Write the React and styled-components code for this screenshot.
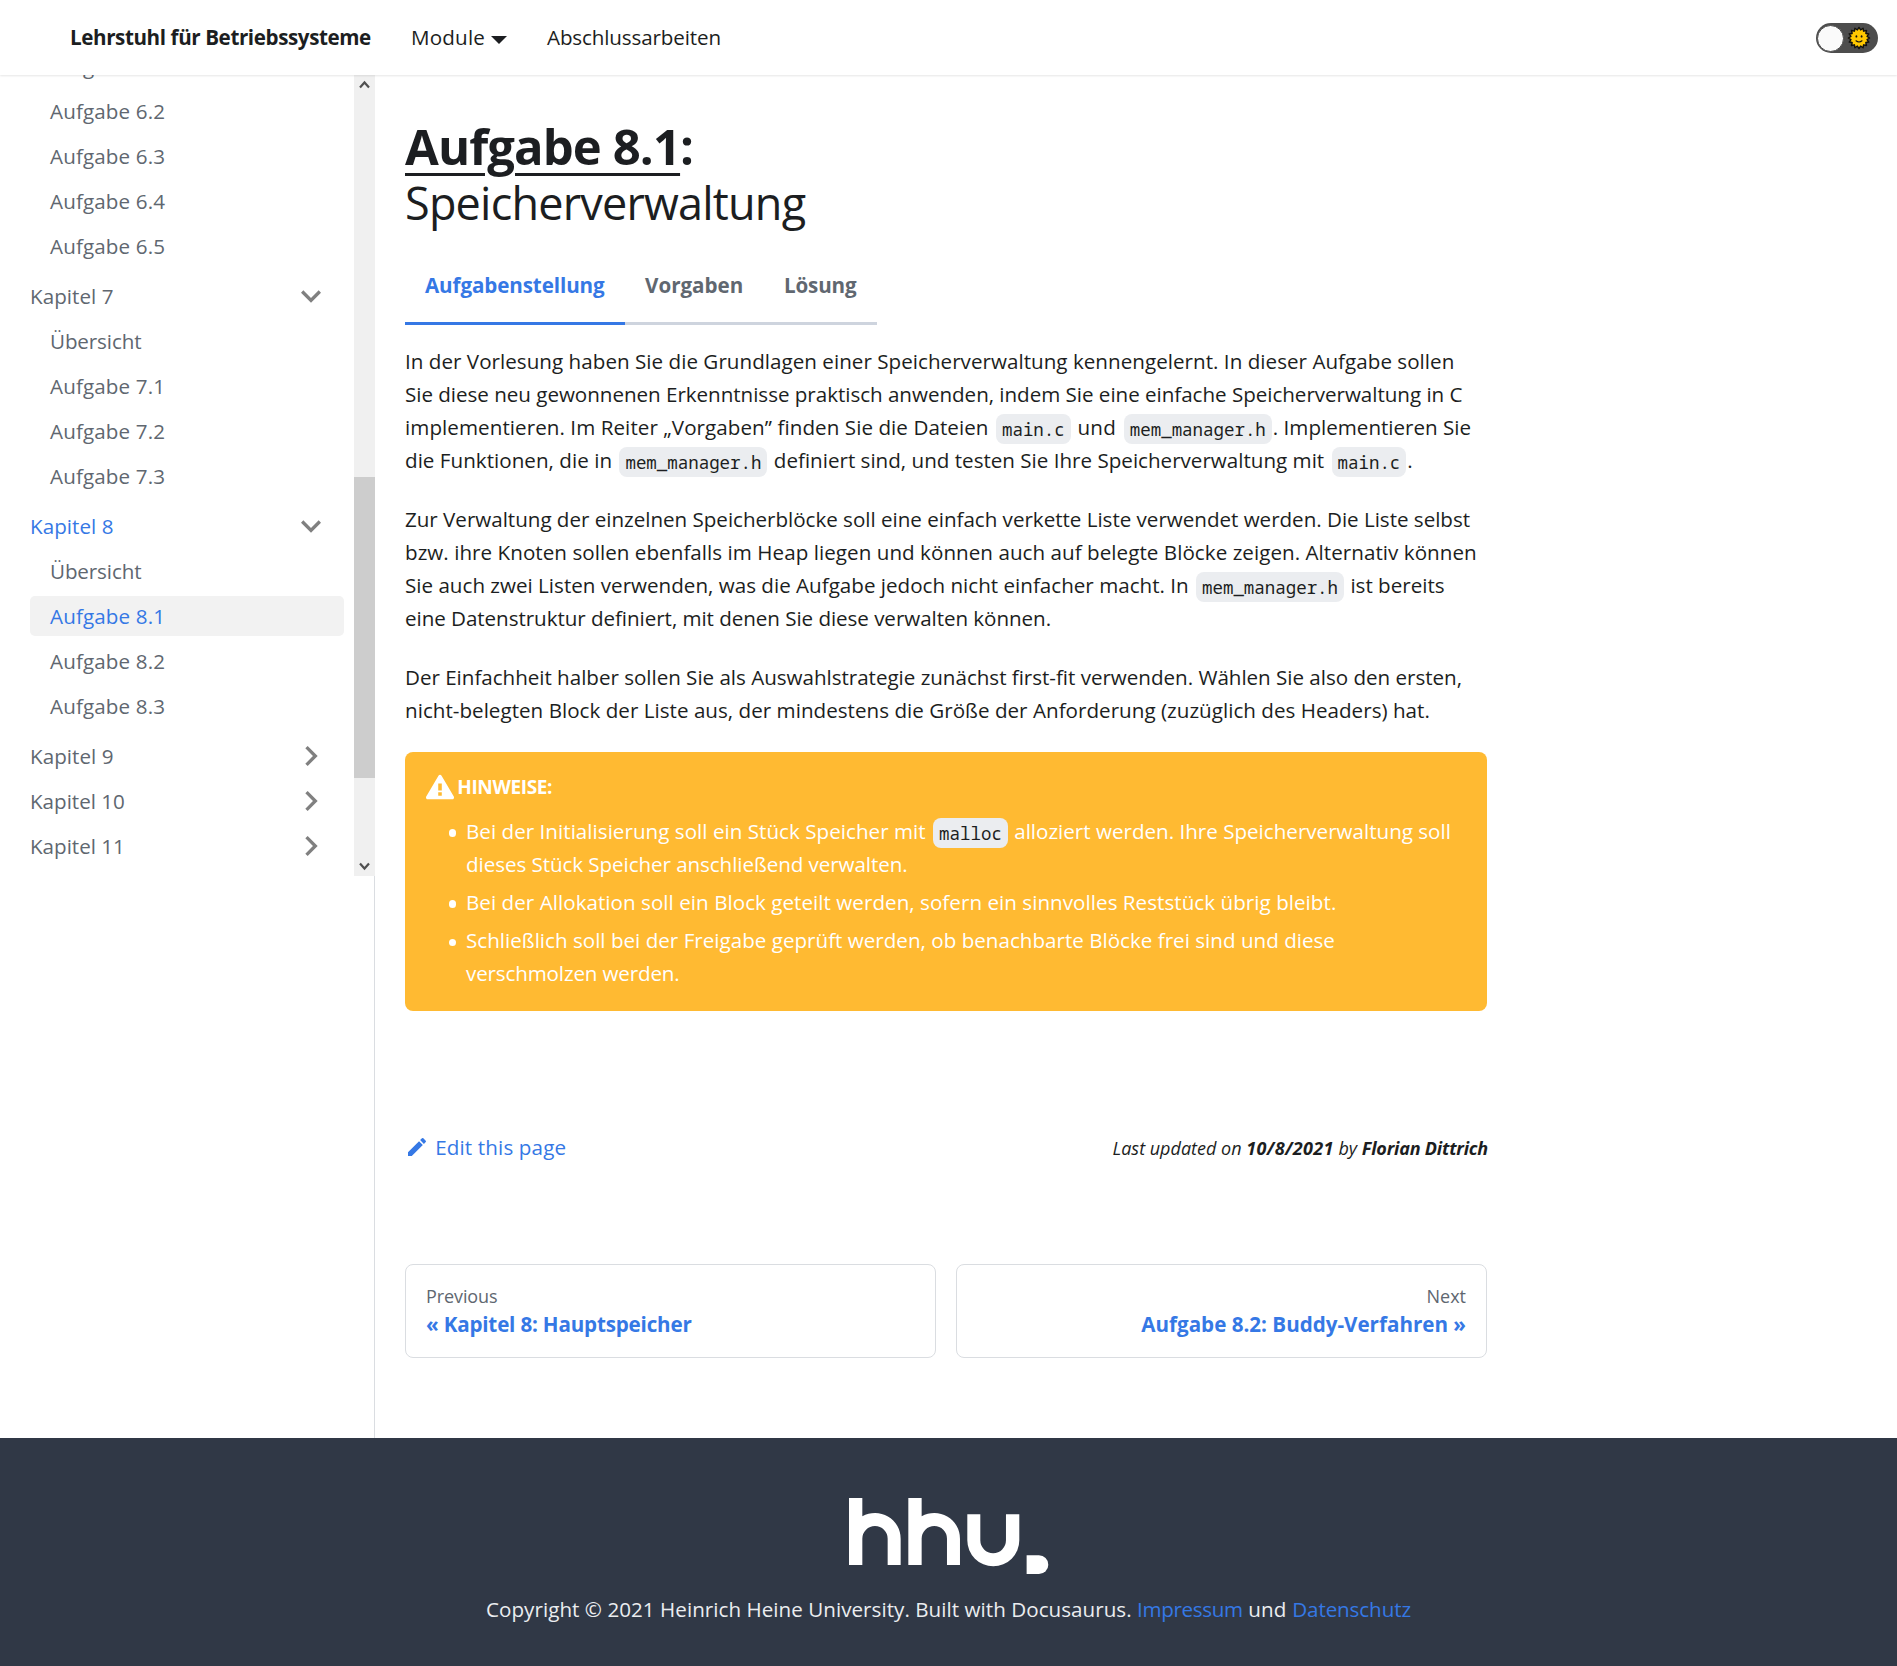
import React from 'react';
import styled, { createGlobalStyle } from 'styled-components';

const blue = '#3578e5';
const ink = '#1c1e21';
const muted = '#606770';
const line = '#dadde1';

const GlobalStyle = createGlobalStyle`
  *, *::before, *::after { box-sizing: border-box; }
  html, body { margin: 0; padding: 0; background: #fff; }
  body {
    font-family: 'Open Sans', 'Noto Sans', sans-serif;
    font-size: 20.6px;
    line-height: 33.25px;
    color: ${ink};
  }
  a { color: inherit; text-decoration: none; }
  ul { list-style: none; margin: 0; padding: 0; }
  p, h1, h5 { margin: 0; }
`;

const T = styled.span`
  letter-spacing: ${(p) => p.$ls || 0}px;
`;

const Page = styled.div`
  display: flex;
  flex-direction: column;
  min-height: 1666px;
`;

const Navbar = styled.nav`
  position: relative;
  z-index: 2;
  display: flex;
  align-items: center;
  justify-content: space-between;
  height: 75px;
  padding: 0 19px 0 70px;
  background: #fff;
  box-shadow: 0 1px 2px 0 rgba(0, 0, 0, 0.1);
`;

const NavItems = styled.div`
  display: flex;
  align-items: center;
`;

const Brand = styled.a`
  width: 341px;
  font-weight: 700;
`;

const NavLink = styled.a`
  display: flex;
  align-items: center;
  width: ${(p) => p.$width || 'auto'};
`;

const Caret = styled.span`
  margin: 5px 0 0 6px;
  border: 8px solid transparent;
  border-top-color: ${ink};
  border-bottom-width: 0;
`;

const Toggle = styled.button`
  display: flex;
  align-items: center;
  justify-content: space-between;
  width: 62px;
  height: 30px;
  margin: 1px 0 0;
  padding: 0 7px 0 1px;
  border: 0;
  border-radius: 30px;
  background: #4d4d4d;
`;

const Knob = styled.span`
  width: 27px;
  height: 27px;
  border: 1px solid #4d4d4d;
  border-radius: 50%;
  background: #fafafa;
`;

const Body = styled.div`
  display: flex;
  height: 1363px;
`;

const Sidebar = styled.aside`
  width: 375px;
  flex: none;
  border-right: 1px solid ${line};
`;

const SidebarView = styled.div`
  display: flex;
  width: 375px;
  height: 801px;
  overflow: hidden;
`;

const Menu = styled.ul`
  flex: 1;
  margin-top: -29px;
  padding: 0 10px 0 30px;
`;

const MenuItem = styled.li`
  display: flex;
  align-items: center;
  justify-content: space-between;
  height: 40px;
  margin-top: ${(p) => (p.$chapterStart ? 10 : 5)}px;
  padding-left: ${(p) => (p.$nested ? 20 : 0)}px;
  border-radius: 5px;
  line-height: 25px;
  letter-spacing: ${(p) => p.$ls || 0}px;
  color: ${(p) => (p.$active ? blue : muted)};
  background: ${(p) => (p.$active && p.$nested ? '#f2f2f2' : 'transparent')};
  &:first-child { margin-top: 0; }
`;

const Chevron = styled.svg`
  width: 40px;
  height: 40px;
  margin-right: 12.6px;
  fill: #808080;
  transform: rotate(${(p) => (p.$open ? 180 : 90)}deg);
`;

const Scrollbar = styled.div`
  display: flex;
  flex-direction: column;
  align-items: center;
  justify-content: space-between;
  width: 21px;
  padding: 5px 0;
  background: linear-gradient(#cdcdcd, #cdcdcd) 0 402px / 21px 301px no-repeat #f0f0f0;
  svg { width: 11px; height: 9px; fill: none; stroke: #505050; stroke-width: 2.2; }
`;

const Main = styled.main`
  width: 1082px;
  margin: 43.5px 0 0 30px;
`;

const Title = styled.h1`
  display: flex;
  flex-direction: column;
  font-size: 49px;
  line-height: 55px;
  font-weight: 700;
  u {
    text-decoration-thickness: 3px;
    text-underline-offset: 8px;
  }
`;

const Subtitle = styled.span`
  font-size: 45px;
  line-height: 57px;
  font-weight: 400;
`;

const Tabs = styled.div`
  display: flex;
  margin-top: 16.5px;
`;

const Tab = styled.div`
  width: ${(p) => p.$width}px;
  height: 78px;
  padding: 22px 0 0 20px;
  border-bottom: 3px solid ${(p) => (p.$active ? blue : '#ced4de')};
  color: ${(p) => (p.$active ? blue : muted)};
  font-weight: 700;
`;

const Article = styled.div`
  margin-top: 20px;
`;

const Paragraph = styled.p`
  margin-bottom: 25.5px;
  &:last-of-type { margin-bottom: 24.9px; }
`;

const Line = styled.span`
  display: block;
  height: 33.1px;
  white-space: nowrap;
`;

const Code = styled.code`
  display: inline-block;
  height: 30px;
  margin: 0 1px 0 2px;
  padding: 0 6px;
  border-radius: 8px;
  background: #ebedf0;
  color: ${ink};
  font-family: 'Noto Sans Mono', 'Liberation Mono', monospace;
  font-size: 17.45px;
  line-height: 30px;
  vertical-align: -1px;
`;

const Admonition = styled.section`
  height: 259px;
  padding: 20px 22px;
  border-radius: 8px;
  background: #ffba32;
  color: #fff;
`;

const AdmonitionTitle = styled.h5`
  display: flex;
  align-items: center;
  gap: 3.2px;
  height: 30px;
  font-size: 19px;
  font-weight: 700;
  svg { width: 28px; height: 28px; margin-left: -1px; fill: #fff; }
  span { padding-top: 1px; }
`;

const Hints = styled.ul`
  display: flex;
  flex-direction: column;
  gap: 5px;
  margin-top: 12.9px;
`;

const Hint = styled.li`
  display: flex;
  &::before {
    content: '';
    flex: none;
    width: 7.5px;
    height: 7.5px;
    margin: 14.5px 10px 0 21.5px;
    border-radius: 50%;
    background: #fff;
  }
`;

const DocMeta = styled.div`
  display: flex;
  align-items: center;
  justify-content: space-between;
  height: 34px;
  margin-top: 119.5px;
`;

const EditLink = styled.a`
  display: flex;
  align-items: center;
  gap: 6.2px;
  color: ${blue};
  svg { width: 24px; height: 24px; fill: ${blue}; }
`;

const Updated = styled.em`
  margin-right: -1px;
  padding-top: 2px;
  font-size: 18px;
  white-space: nowrap;
`;

const Pager = styled.nav`
  display: grid;
  grid-template-columns: 1fr 1fr;
  gap: 20px;
  margin-top: 99.5px;
`;

const PagerLink = styled.a`
  height: 94px;
  padding: 17px 20px;
  border: 1px solid ${line};
  border-radius: 8px;
  text-align: ${(p) => (p.$next ? 'right' : 'left')};
`;

const PagerHint = styled.div`
  font-size: 18px;
  line-height: 28px;
  color: ${muted};
`;

const PagerLabel = styled.div`
  font-weight: 700;
  line-height: 28px;
  color: ${blue};
`;

const Footer = styled.footer`
  display: flex;
  flex-direction: column;
  align-items: center;
  flex: 1;
  padding-top: 60px;
  background: #303846;
  color: #ebedf0;
`;

const Logo = styled.svg`
  width: 199.3px;
  height: 76px;
  margin-left: 1px;
  fill: #fff;
`;

const Copyright = styled.div`
  margin-top: 19px;
  white-space: nowrap;
  a { color: ${blue}; }
`;

const MENU = [
  { t: 'Aufgabe 6.1', nested: true, ls: 0.13 },
  { t: 'Aufgabe 6.2', nested: true, ls: 0.13 },
  { t: 'Aufgabe 6.3', nested: true, ls: 0.13 },
  { t: 'Aufgabe 6.4', nested: true, ls: 0.13 },
  { t: 'Aufgabe 6.5', nested: true, ls: 0.13 },
  { t: 'Kapitel 7', open: true, start: true, ls: 0.05 },
  { t: 'Übersicht', nested: true, ls: -0.12 },
  { t: 'Aufgabe 7.1', nested: true, ls: 0.13 },
  { t: 'Aufgabe 7.2', nested: true, ls: 0.13 },
  { t: 'Aufgabe 7.3', nested: true, ls: 0.13 },
  { t: 'Kapitel 8', open: true, start: true, active: true, ls: 0.05 },
  { t: 'Übersicht', nested: true, ls: -0.12 },
  { t: 'Aufgabe 8.1', nested: true, active: true, ls: 0.13 },
  { t: 'Aufgabe 8.2', nested: true, ls: 0.13 },
  { t: 'Aufgabe 8.3', nested: true, ls: 0.13 },
  { t: 'Kapitel 9', start: true, ls: 0.05 },
  { t: 'Kapitel 10' },
  { t: 'Kapitel 11' },
];

const spikes = Array.from({ length: 32 }, (_, i) => {
  const r = i % 2 ? 8.2 : 10.6;
  const a = (i * Math.PI) / 16;
  return `${(12 + r * Math.cos(a)).toFixed(2)},${(12 + r * Math.sin(a)).toFixed(2)}`;
}).join(' ');

const Sun = () => (
  <svg width="24" height="24" viewBox="0 0 24 24">
    <polygon points={spikes} fill="#ffc800" stroke="#111" strokeWidth="1.4" strokeLinejoin="round" />
    <ellipse cx="9.4" cy="10.4" rx="0.9" ry="1.2" fill="#111" />
    <ellipse cx="14.6" cy="10.4" rx="0.9" ry="1.2" fill="#111" />
    <path d="M9 14.8q3 2.4 6 0" fill="none" stroke="#111" strokeWidth="1.1" strokeLinecap="round" />
  </svg>
);

const letterH = 'v201h-40v-201h40v55a77 77 0 0 1 115 67v79h-39v-79a38 38 0 0 0-76 0';

export default function App() {
  return (
    <Page>
      <GlobalStyle />
      <Navbar>
        <NavItems>
          <Brand><T $ls={-0.4}>Lehrstuhl für Betriebssysteme</T></Brand>
          <NavLink $width="136px"><T $ls={0.2}>Module</T><Caret /></NavLink>
          <NavLink><T $ls={-0.13}>Abschlussarbeiten</T></NavLink>
        </NavItems>
        <Toggle><Knob /><Sun /></Toggle>
      </Navbar>
      <Body>
        <Sidebar>
          <SidebarView>
            <Menu>
              {MENU.map((m, i) => (
                <MenuItem key={i} $nested={m.nested} $active={m.active} $chapterStart={m.start} $ls={m.ls}>
                  <span>{m.t}</span>
                  {!m.nested && (
                    <Chevron viewBox="0 0 24 24" $open={m.open}>
                      <path d="M7.41 15.41L12 10.83l4.59 4.58L18 14l-6-6-6 6z" />
                    </Chevron>
                  )}
                </MenuItem>
              ))}
            </Menu>
            <Scrollbar>
              <svg viewBox="0 0 11 9"><path d="M1 7.5L5.5 2.5L10 7.5" /></svg>
              <svg viewBox="0 0 11 9"><path d="M1 1.5L5.5 6.5L10 1.5" /></svg>
            </Scrollbar>
          </SidebarView>
        </Sidebar>
        <Main>
          <Title>
            <T $ls={-0.9}><u>Aufgabe 8.1</u>:</T>
            <Subtitle><T $ls={-0.8}>Speicherverwaltung</T></Subtitle>
          </Title>
          <Tabs>
            <Tab $active $width={220}><T $ls={-0.1}>Aufgabenstellung</T></Tab>
            <Tab $width={139}><T>Vorgaben</T></Tab>
            <Tab $width={113}><T $ls={-0.15}>Lösung</T></Tab>
          </Tabs>
          <Article>
            <Paragraph>
              <Line><T $ls={0.03}>In der Vorlesung haben Sie die Grundlagen einer Speicherverwaltung kennengelernt. In dieser Aufgabe sollen</T></Line>
              <Line><T $ls={-0.031}>Sie diese neu gewonnenen Erkenntnisse praktisch anwenden, indem Sie eine einfache Speicherverwaltung in C</T></Line>
              <Line><T $ls={0.063}>implementieren. Im Reiter „Vorgaben” finden Sie die Dateien </T><Code>main.c</Code><T $ls={0.3}> und </T><Code>mem_manager.h</Code><T>. Implementieren Sie</T></Line>
              <Line><T $ls={0.03}>die Funktionen, die in </T><Code>mem_manager.h</Code><T> definiert sind, und testen Sie Ihre Speicherverwaltung mit </T><Code>main.c</Code><T>.</T></Line>
            </Paragraph>
            <Paragraph>
              <Line><T $ls={-0.02}>Zur Verwaltung der einzelnen Speicherblöcke soll eine einfach verkette Liste verwendet werden. Die Liste selbst</T></Line>
              <Line><T $ls={0.045}>bzw. ihre Knoten sollen ebenfalls im Heap liegen und können auch auf belegte Blöcke zeigen. Alternativ können</T></Line>
              <Line><T $ls={0.005}>Sie auch zwei Listen verwenden, was die Aufgabe jedoch nicht einfacher macht. In </T><Code>mem_manager.h</Code><T> ist bereits</T></Line>
              <Line><T $ls={-0.055}>eine Datenstruktur definiert, mit denen Sie diese verwalten können.</T></Line>
            </Paragraph>
            <Paragraph>
              <Line><T $ls={-0.024}>Der Einfachheit halber sollen Sie als Auswahlstrategie zunächst first-fit verwenden. Wählen Sie also den ersten,</T></Line>
              <Line><T $ls={0.024}>nicht-belegten Block der Liste aus, der mindestens die Größe der Anforderung (zuzüglich des Headers) hat.</T></Line>
            </Paragraph>
            <Admonition>
              <AdmonitionTitle>
                <svg viewBox="0 0 16 16"><path d="M8.893 1.5c-.183-.31-.52-.5-.887-.5s-.703.19-.886.5L.138 13.499a.98.98 0 0 0 0 1.001c.193.31.53.501.886.501h13.964c.367 0 .704-.19.877-.5a1.03 1.03 0 0 0 .01-1.002L8.893 1.5zm.133 11.497H6.987v-2.003h2.039v2.003zm0-3.004H6.987V5.987h2.039v4.006z" /></svg>
                <T $ls={-0.35}>HINWEISE:</T>
              </AdmonitionTitle>
              <Hints>
                <Hint>
                  <div>
                    <Line><T $ls={0.03}>Bei der Initialisierung soll ein Stück Speicher mit </T><Code>malloc</Code><T> alloziert werden. Ihre Speicherverwaltung soll</T></Line>
                    <Line><T $ls={-0.07}>dieses Stück Speicher anschließend verwalten.</T></Line>
                  </div>
                </Hint>
                <Hint>
                  <Line><T $ls={0.04}>Bei der Allokation soll ein Block geteilt werden, sofern ein sinnvolles Reststück übrig bleibt.</T></Line>
                </Hint>
                <Hint>
                  <div>
                    <Line><T $ls={0.01}>Schließlich soll bei der Freigabe geprüft werden, ob benachbarte Blöcke frei sind und diese</T></Line>
                    <Line><T $ls={-0.15}>verschmolzen werden.</T></Line>
                  </div>
                </Hint>
              </Hints>
            </Admonition>
          </Article>
          <DocMeta>
            <EditLink>
              <svg viewBox="0 0 40 40"><path d="m34.5 11.7l-3 3.1-6.3-6.3 3.1-3q0.5-0.5 1.2-0.5t1.1 0.5l3.9 3.9q0.5 0.4 0.5 1.1t-0.5 1.2z m-29.5 17.1l18.4-18.5 6.3 6.3-18.4 18.4h-6.3v-6.2z" /></svg>
              <T $ls={0.14}>Edit this page</T>
            </EditLink>
            <Updated>
              <T>Last updated on </T><b><T $ls={0.33}>10/8/2021</T></b><T> by </T><b><T $ls={-0.2}>Florian Dittrich</T></b>
            </Updated>
          </DocMeta>
          <Pager>
            <PagerLink>
              <PagerHint><T $ls={-0.1}>Previous</T></PagerHint>
              <PagerLabel><T $ls={-0.18}>« Kapitel 8: Hauptspeicher</T></PagerLabel>
            </PagerLink>
            <PagerLink $next>
              <PagerHint><T>Next</T></PagerHint>
              <PagerLabel><T>Aufgabe 8.2: Buddy-Verfahren »</T></PagerLabel>
            </PagerLink>
          </Pager>
        </Main>
      </Body>
      <Footer>
        <Logo viewBox="58 54 598 228">
          <path d={`M98 54${letterH}`} />
          <path d={`M276 54${letterH}`} />
          <path d="M413 103h39v78a38.5 38.5 0 0 0 77 0v-78h40v78a78 78 0 0 1-156 0z" />
          <path d="M591 226h37a28 28 0 0 1 0 56h-37z" />
        </Logo>
        <Copyright>
          <T $ls={0.042}>Copyright © 2021 Heinrich Heine University. Built with Docusaurus. </T><a><T $ls={-0.35}>Impressum</T></a><T $ls={0.2}> und </T><a><T $ls={-0.1}>Datenschutz</T></a>
        </Copyright>
      </Footer>
    </Page>
  );
}
